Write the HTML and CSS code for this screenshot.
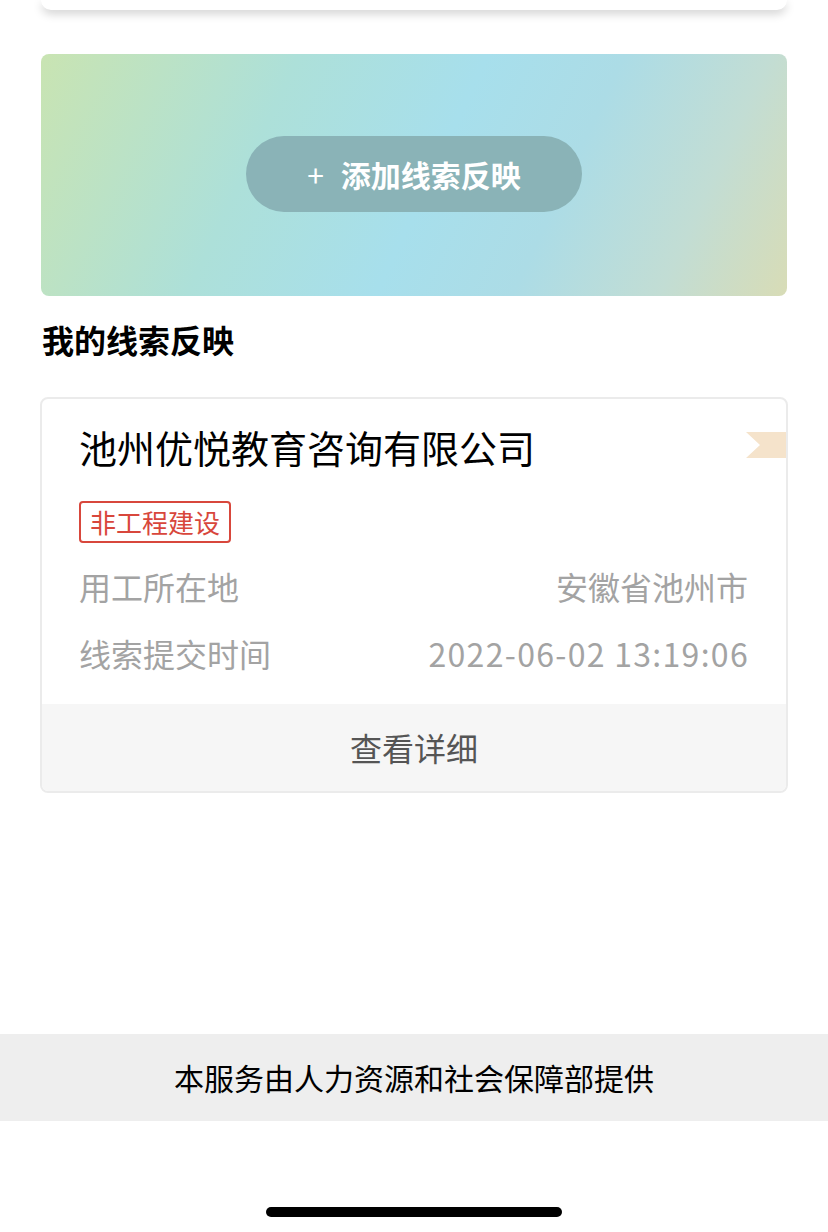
FILE: index.html
```html
<!DOCTYPE html>
<html lang="zh-CN">
  <head>
    <meta charset="UTF-8" />
    <meta name="viewport" content="width=device-width, initial-scale=1.0" />
    <title>我的线索反映</title>
    <link rel="stylesheet" href="styles.css">
  </head>
  <body>
    <div class="page">
      <div class="top-card"></div>

      <div class="banner">
        <button class="add-btn"><span class="plus">+</span> 添加线索反映</button>
      </div>

      <h2 class="section-title">我的线索反映</h2>

      <div class="clue-card">
        <div class="card-body">
          <div class="card-title">池州优悦教育咨询有限公司</div>
          <span class="ribbon"></span>
          <span class="tag">非工程建设</span>
          <div class="row">
            <span>用工所在地</span>
            <span>安徽省池州市</span>
          </div>
          <div class="row">
            <span>线索提交时间</span>
            <span class="date">2022-06-02 13:19:06</span>
          </div>
        </div>
        <div class="card-footer">查看详细</div>
      </div>
    </div>

    <div class="provider">本服务由人力资源和社会保障部提供</div>

    <div class="home-bar"></div>
  </body>
</html>
```

FILE: styles.css
```css
body {
  margin: 0;
  background-color: #fff;
  font-family: "Noto Sans CJK SC", "Liberation Sans", sans-serif;
  color: #000;
}

.page {
  padding: 0 40px;
  height: 1034px;
}

.top-card {
  margin: 0 1px;
  height: 10px;
  background: #fff;
  border-radius: 0 0 14px 14px;
  box-shadow: 0 4px 10px rgba(0, 0, 0, 0.18);
}

.banner {
  margin: 44px 1px 0;
  height: 242px;
  border-radius: 8px;
  background: linear-gradient(115deg, #c9e4b2 0%, #ade0d9 30%, #a7dfec 52%, #acdce6 68%, #c2ddd4 85%, #d8dcb6 100%);
  display: flex;
  justify-content: center;
  align-items: flex-start;
}

.add-btn {
  margin-top: 82px;
  width: 336px;
  height: 76px;
  border: none;
  border-radius: 38px;
  background-color: #8ab3b7;
  color: #fff;
  font-family: inherit;
  font-size: 30px;
  font-weight: 700;
  cursor: pointer;
}

.add-btn .plus {
  font-weight: 400;
  margin-right: 10px;
}

.section-title {
  margin: 23px 0 0 2px;
  font-size: 32px;
  font-weight: 700;
  line-height: 40px;
}

.clue-card {
  margin-top: 38px;
  border: 2px solid #ebebeb;
  border-radius: 8px;
  overflow: hidden;
}

.card-body {
  position: relative;
  padding: 22px 38px 31px 37px;
}

.card-title {
  font-size: 38px;
  line-height: 52px;
}

.ribbon {
  position: absolute;
  top: 33px;
  right: 0;
  width: 40px;
  height: 26px;
  background-color: #f5e3cb;
  clip-path: polygon(0 0, 100% 0, 100% 100%, 0 100%, 14px 50%);
}

.tag {
  display: inline-block;
  margin-top: 28px;
  padding: 0 9px;
  border: 2px solid #d8473c;
  border-radius: 4px;
  color: #d8473c;
  font-size: 26px;
  line-height: 38px;
}

.row {
  display: flex;
  justify-content: space-between;
  color: #a3a3a3;
  font-size: 32px;
  line-height: 40px;
  margin-top: 23px;
}

.row + .row {
  margin-top: 27px;
}

.date {
  letter-spacing: 1.3px;
  margin-right: -1px;
}

.card-footer {
  background-color: #f6f6f6;
  color: #555;
  text-align: center;
  font-size: 32px;
  line-height: 87px;
}

.provider {
  height: 87px;
  line-height: 87px;
  background-color: #eeeeee;
  text-align: center;
  font-size: 30px;
}

.home-bar {
  width: 296px;
  height: 10px;
  margin: 86px auto 0;
  border-radius: 5px;
  background-color: #000;
}
```
